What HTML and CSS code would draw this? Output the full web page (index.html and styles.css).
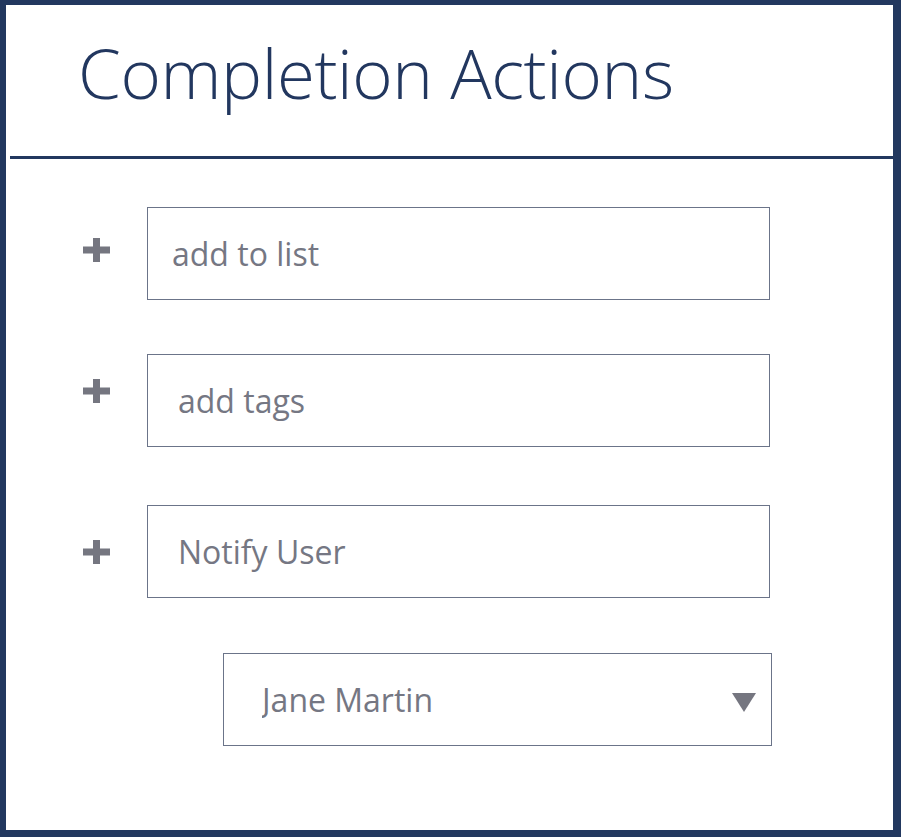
FILE: index.html
```html
<!DOCTYPE html>
<html lang="en">
<head>
    <meta charset="UTF-8">
    <meta name="viewport" content="width=device-width, initial-scale=1.0">
    <title>Completion Actions</title>
    <link rel="stylesheet" href="styles.css">
</head>
<body>
    <div class="panel">
        <div class="panel-header">
            <h1>Completion Actions</h1>
        </div>

        <div class="panel-body">
            <!-- Action: list -->
            <div class="action-row action-row--list">
                <span class="add-icon">
                    <svg width="27" height="24" viewBox="0 0 27 24"><path d="M10 0h7v8.5h10v7H17V24h-7v-8.5H0v-7h10z" fill="#757680"/></svg>
                </span>
                <input type="text" class="action-field action-field--list" placeholder="add to list">
            </div>

            <!-- Action: tags -->
            <div class="action-row action-row--tags">
                <span class="add-icon">
                    <svg width="27" height="24" viewBox="0 0 27 24"><path d="M10 0h7v8.5h10v7H17V24h-7v-8.5H0v-7h10z" fill="#757680"/></svg>
                </span>
                <input type="text" class="action-field" placeholder="add tags">
            </div>

            <!-- Action: notify -->
            <div class="action-row action-row--notify">
                <span class="add-icon">
                    <svg width="27" height="24" viewBox="0 0 27 24"><path d="M10 0h7v8.5h10v7H17V24h-7v-8.5H0v-7h10z" fill="#757680"/></svg>
                </span>
                <input type="text" class="action-field" placeholder="Notify User">
            </div>

            <div class="user-select">
                <select>
                    <option>Jane Martin</option>
                </select>
                <svg class="select-arrow" width="24" height="19" viewBox="0 0 24 19"><path d="M0 0h24L12 19z" fill="#757680"/></svg>
            </div>
        </div>
    </div>
</body>
</html>
```

FILE: styles.css
```css
html, body {
    margin: 0;
    height: 100%;
}
body {
    font-family: 'Open Sans', 'Noto Sans', sans-serif;
    background-color: #ffffff;
}
.panel {
    box-sizing: border-box;
    height: 837px;
    border-style: solid;
    border-color: #22385f;
    border-width: 5px 8px 7px 6px; /* uneven, as in the mockup */
    background-color: #ffffff;
}
.panel-header {
    padding: 33px 0 0 68px;
    height: 118px;
    border-bottom: 3px solid #22385f;
    margin-left: 4px;
}
.panel-header h1 {
    margin: 0;
    font-size: 69px;
    font-weight: 300;
    line-height: 1;
    color: #22375f;
    letter-spacing: -0.4px;
}
.panel-body {
    display: flex;
    flex-direction: column;
    gap: 54px;
    padding: 48px 0 0 77px;
}
.action-row {
    display: flex;
    align-items: center;
    gap: 37px;
}
.add-icon {
    display: flex;
    width: 27px;
    height: 24px;
}
.action-row--list .add-icon {
    margin-bottom: 7px;
}
.action-row--tags .add-icon {
    margin-bottom: 20px;
}
.action-row--notify {
    margin-top: 4px;
}
.action-field {
    box-sizing: border-box;
    width: 623px;
    height: 93px;
    padding: 0 30px;
    border: 1px solid #6b7489;
    border-radius: 0;
    font-family: inherit;
    font-size: 32px;
    color: #757783;
    outline: none;
}
.action-field--list {
    padding-left: 24px;
}
.action-field::placeholder {
    color: #757783;
    opacity: 1;
}
.user-select {
    position: relative;
    width: 549px;
    margin: 1px 0 0 140px;
}
.user-select select {
    box-sizing: border-box;
    width: 100%;
    height: 93px;
    padding: 0 60px 0 38px;
    border: 1px solid #6b7489;
    border-radius: 0;
    background-color: #ffffff;
    font-family: inherit;
    font-size: 32px;
    color: #757783;
    -webkit-appearance: none;
    appearance: none;
    outline: none;
}
.select-arrow {
    position: absolute;
    right: 16px;
    top: 40px;
    pointer-events: none;
}
```
